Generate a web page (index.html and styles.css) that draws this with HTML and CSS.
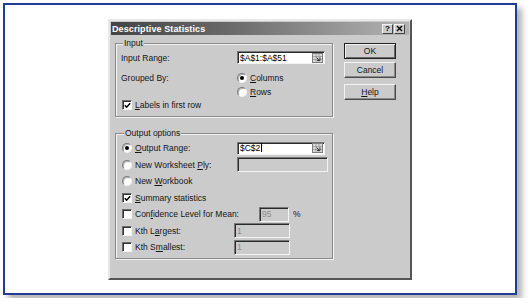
FILE: index.html
```html
<!DOCTYPE html>
<html lang="en">
<head>
    <meta charset="UTF-8">
    <title>Descriptive Statistics</title>
    <link rel="stylesheet" href="styles.css">
</head>
<body>

    <!-- Printed frame -->
    <div class="frame">

        <!-- Dialog window -->
        <div class="dialog">
            <div class="titlebar">
                <span class="title">Descriptive Statistics</span>
                <span class="title-btn">?</span>
                <span class="title-btn">
                    <svg width="7" height="7" viewBox="0 0 7 7"><path d="M1 1l5 5M6 1l-5 5" stroke="#000" stroke-width="1.4"/></svg>
                </span>
            </div>

            <div class="dialog-body">
                <div class="left-col">

                    <!-- Input group -->
                    <fieldset class="group group-input">
                        <legend>Input</legend>
                        <div class="row">
                            <span class="label" style="width:116px">Input Range:</span>
                            <div class="field field-range">
                                <span>$A$1:$A$51</span>
                                <svg class="picker" width="11" height="10" viewBox="0 0 11 10"><rect x="0.5" y="0.5" width="10" height="9" fill="#dadada" stroke="#7c7c7c"/><path d="M1 3.5h9M1 6.5h9M4 1v8M7 1v8" stroke="#a4a4a4"/><path d="M4.5 4.5l3 3M8 4.5v3H5" stroke="#3a3a3a" fill="none"/></svg>
                            </div>
                        </div>
                        <div class="row row-gap">
                            <span class="label" style="width:116px">Grouped By:</span>
                            <span class="opt"><span class="radio on"></span><span><u>C</u>olumns</span></span>
                        </div>
                        <div class="row">
                            <span class="label" style="width:116px"></span>
                            <span class="opt"><span class="radio"></span><span><u>R</u>ows</span></span>
                        </div>
                        <div class="row">
                            <span class="opt opt-check"><span class="check on"><svg width="7" height="7" viewBox="0 0 7 7"><path d="M0.8 3.2l1.8 2L6.2 1.2" stroke="#000" stroke-width="1.5" fill="none"/></svg></span><span><u>L</u>abels in first row</span></span>
                        </div>
                    </fieldset>

                    <!-- Output group -->
                    <fieldset class="group group-output">
                        <legend>Output options</legend>
                        <div class="row">
                            <span class="opt" style="width:115px"><span class="radio on"></span><span><u>O</u>utput Range:</span></span>
                            <div class="field field-range">
                                <span>$C$2<span class="caret"></span></span>
                                <svg class="picker" width="11" height="10" viewBox="0 0 11 10"><rect x="0.5" y="0.5" width="10" height="9" fill="#dadada" stroke="#7c7c7c"/><path d="M1 3.5h9M1 6.5h9M4 1v8M7 1v8" stroke="#a4a4a4"/><path d="M4.5 4.5l3 3M8 4.5v3H5" stroke="#3a3a3a" fill="none"/></svg>
                            </div>
                        </div>
                        <div class="row">
                            <span class="opt" style="width:115px"><span class="radio"></span><span>New Worksheet <u>P</u>ly:</span></span>
                            <div class="field field-off field-ply"></div>
                        </div>
                        <div class="row">
                            <span class="opt"><span class="radio"></span><span>New <u>W</u>orkbook</span></span>
                        </div>
                        <div class="row">
                            <span class="opt"><span class="check on"><svg width="7" height="7" viewBox="0 0 7 7"><path d="M0.8 3.2l1.8 2L6.2 1.2" stroke="#000" stroke-width="1.5" fill="none"/></svg></span><span><u>S</u>ummary statistics</span></span>
                        </div>
                        <div class="row">
                            <span class="opt" style="width:137px"><span class="check"></span><span>Con<u>f</u>idence Level for Mean:</span></span>
                            <div class="field field-off field-conf">95</div>
                            <span class="pct">%</span>
                        </div>
                        <div class="row">
                            <span class="opt" style="width:112px"><span class="check"></span><span>Kth L<u>a</u>rgest:</span></span>
                            <div class="field field-off field-kth">1</div>
                        </div>
                        <div class="row">
                            <span class="opt" style="width:112px"><span class="check"></span><span>Kth S<u>m</u>allest:</span></span>
                            <div class="field field-off field-kth">1</div>
                        </div>
                    </fieldset>
                </div>

                <!-- Buttons -->
                <div class="buttons">
                    <button class="btn btn-default">OK</button>
                    <button class="btn btn-cancel">Cancel</button>
                    <button class="btn btn-help"><u>H</u>elp</button>
                </div>
            </div>
        </div>
    </div>

</body>
</html>
```

FILE: styles.css
```css
* {
    box-sizing: border-box;
}
body {
    margin: 0;
    background-color: #fff;
    font-family: "Liberation Sans", Arial, sans-serif;
    font-size: 8.5px;
    color: #151515;
}
u {
    text-decoration-thickness: 1px;
    text-underline-offset: 1px;
}
.frame {
    margin: 3px;
    width: 514px;
    height: 292px;
    border: 2px solid #213c94;
    box-shadow: 5px 5px 6px rgba(0, 0, 0, 0.3);
    padding: 14px 0 0 103px;
}
.dialog {
    width: 304px;
    height: 261px;
    background-color: #cbcbcb;
    border: 2px solid;
    border-color: #e8e8e8 #555 #555 #e8e8e8;
    padding: 1px;
}
.titlebar {
    height: 13px;
    display: flex;
    align-items: center;
    gap: 1px;
    padding: 0 4px 0 1px;
    background: linear-gradient(to right, #444 0%, #6a6a6a 40%, #b4b4b4 100%);
    color: #fff;
    font-size: 9px;
    font-weight: bold;
}
.titlebar .title {
    flex: 1;
    letter-spacing: 0.1px;
}
.title-btn {
    width: 11px;
    height: 10px;
    display: flex;
    align-items: center;
    justify-content: center;
    background-color: #cbcbcb;
    border: 1px solid;
    border-color: #f2f2f2 #444 #444 #f2f2f2;
    color: #000;
    font-size: 8px;
    font-weight: bold;
}
.dialog-body {
    display: flex;
    padding: 3px 0 0 4px;
}
.left-col {
    width: 218px;
}
.group {
    margin: 0;
    min-width: 0;
    width: 218px;
    border: 1px solid #8a8a8a;
    box-shadow: inset 1px 1px 0 #f2f2f2, 1px 1px 0 #f2f2f2;
}
.group legend {
    height: 10px;
    line-height: 10px;
    padding: 0 1px;
    margin-left: 2px;
    background-color: #cbcbcb;
}
.group-input {
    padding: 3px 0 4px 5px;
}
.group-output {
    margin-top: 11px;
    padding: 2px 0 2px 6px;
}
.row {
    display: flex;
    align-items: center;
    height: 13.5px;
}
.group-output .row {
    height: 16.5px;
}
.row-gap {
    margin-top: 7px;
}
.label {
    flex-shrink: 0;
}
.opt {
    display: flex;
    align-items: center;
    gap: 3px;
    flex-shrink: 0;
}
.opt-check {
    padding-left: 1px;
}
.radio {
    width: 10px;
    height: 10px;
    border-radius: 50%;
    border: 1px solid;
    border-color: #7a7a7a #f4f4f4 #f4f4f4 #7a7a7a;
    background-color: #fff;
    box-shadow: inset 1px 1px 0 #b0b0b0;
    display: flex;
    align-items: center;
    justify-content: center;
}
.radio.on::after {
    content: "";
    width: 4px;
    height: 4px;
    border-radius: 50%;
    background-color: #000;
}
.check {
    width: 10px;
    height: 10px;
    border: 1px solid;
    border-color: #6c6c6c #f4f4f4 #f4f4f4 #6c6c6c;
    background-color: #fff;
    box-shadow: inset 1px 1px 0 #333;
    display: flex;
    align-items: center;
    justify-content: center;
    padding: 1px 0 0 1px;
}
.field {
    border: 1px solid;
    border-color: #777 #f4f4f4 #f4f4f4 #777;
    box-shadow: inset 1px 1px 0 #2a2a2a;
    padding: 0 1px 0 2px;
    display: flex;
    align-items: center;
}
.field-range {
    width: 88px;
    height: 13px;
    background-color: #fff;
    justify-content: space-between;
    color: #000;
}
.picker {
    flex-shrink: 0;
}
.caret {
    display: inline-block;
    width: 1px;
    height: 9px;
    margin-left: 1px;
    vertical-align: -1px;
    background-color: #000;
}
.field-off {
    background-color: #cbcbcb;
    color: #8c8c8c;
}
.field-ply {
    width: 91px;
    height: 15px;
}
.field-conf {
    width: 30px;
    height: 15px;
}
.field-kth {
    width: 56px;
    height: 15px;
}
.pct {
    margin-left: 4px;
}
.buttons {
    display: flex;
    flex-direction: column;
    margin: 5px 0 0 11px;
}
.btn {
    width: 52px;
    height: 16px;
    padding: 0;
    font-family: inherit;
    font-size: 8.5px;
    color: #151515;
    background-color: #cbcbcb;
    border: 1px solid;
    border-color: #f4f4f4 #4a4a4a #4a4a4a #f4f4f4;
    box-shadow: inset -1px -1px 0 #8a8a8a;
}
.btn-default {
    border-color: #222;
    box-shadow: inset 1px 1px 0 #f4f4f4, inset -1px -1px 0 #6a6a6a;
}
.btn-cancel {
    margin-top: 3px;
}
.btn-help {
    margin-top: 6px;
}
```
